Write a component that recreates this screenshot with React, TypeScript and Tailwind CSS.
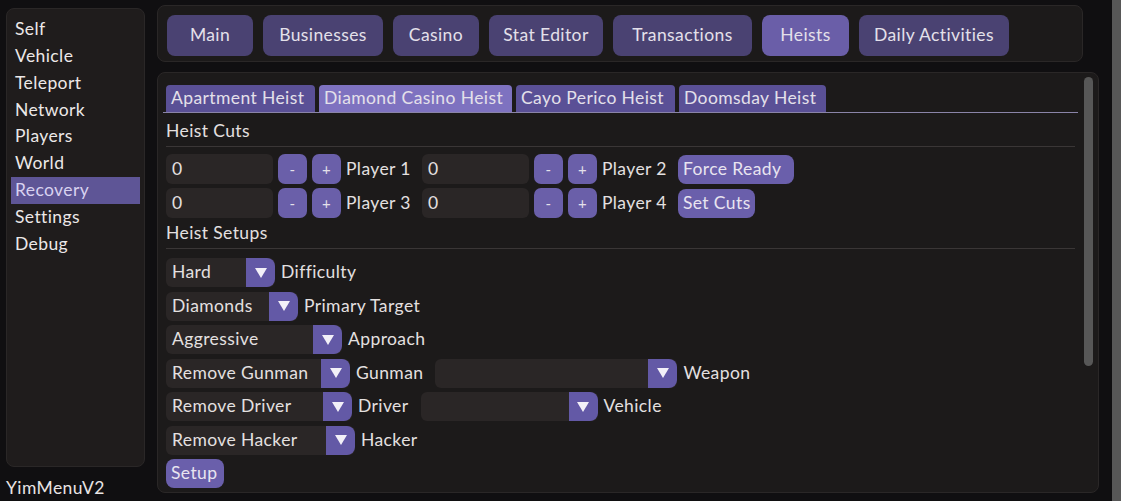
import React from "react";

const font = { fontFamily: "Lato, 'Noto Sans', sans-serif", letterSpacing: "0.4px" };

function TopBtn({ label, active, w }: { label: string; active?: boolean; w: string }) {
  return (
    <div
      className={`h-[41px] ${w} rounded-[8px] flex items-center justify-center text-[17.5px] text-[#e4e0ea] ${
        active ? "bg-[#6a5ea8]" : "bg-[#4a4272]"
      }`}
    >
      {label}
    </div>
  );
}

function SubTab({ label, active, w }: { label: string; active?: boolean; w: string }) {
  return (
    <div
      className={`h-[27px] ${w} rounded-t-[4px] flex items-center px-[5px] text-[17.5px] text-[#e4e0ea] whitespace-nowrap ${
        active ? "bg-[#7e72c0]" : "bg-[#5a5096]"
      }`}
    >
      {label}
    </div>
  );
}

function Input({ w, value }: { w: string; value?: string }) {
  return (
    <div className={`h-[30px] ${w} rounded-[6px] bg-[#2a2626] flex items-center px-[6px] text-[17.5px] text-[#e4e0e0]`}>
      {value}
    </div>
  );
}

function SmallBtn({ label }: { label: string }) {
  return (
    <div className="h-[30px] w-[29px] rounded-[7px] bg-[#6a5fa9] flex items-center justify-center text-[15px] text-[#e4e0ea]">
      {label}
    </div>
  );
}

function PurpleBtn({ label, w }: { label: string; w: string }) {
  return (
    <div className={`h-[29px] ${w} rounded-[8px] bg-[#6a5fab] flex items-center px-[5px] text-[17.5px] text-[#e8e4f0] whitespace-nowrap`}>
      {label}
    </div>
  );
}

function Arrow() {
  return (
    <svg width="14" height="12" viewBox="0 0 14 12">
      <path d="M1 1 L13 1 L7 11 Z" fill="#f2f0f8" />
    </svg>
  );
}

function Combo({ w, value }: { w: string; value?: string }) {
  return (
    <div className={`h-[29px] ${w} flex rounded-[6px] overflow-hidden bg-[#2a2626]`}>
      <div className="flex-1 flex items-center px-[6px] text-[17.5px] text-[#e4e0e0] whitespace-nowrap overflow-hidden">{value}</div>
      <div className="w-[29px] shrink-0 bg-[#6359a6] rounded-r-[8px] flex items-center justify-center">
        <Arrow />
      </div>
    </div>
  );
}

function Label({ children }: { children: React.ReactNode }) {
  return <div className="text-[17.5px] text-[#e4e0e0] whitespace-nowrap">{children}</div>;
}

export default function App() {
  const side = ["Self", "Vehicle", "Teleport", "Network", "Players", "World", "Recovery", "Settings", "Debug"];
  return (
    <div className="w-[1121px] h-[501px] bg-[#100f11] flex overflow-hidden" style={font}>
      {/* Left column */}
      <div className="w-[151px] flex flex-col pl-[6px] pt-[8px]">
        <div className="w-[139px] h-[462px] rounded-[8px] bg-[#1f1c1c] border border-[#2a2727] pt-[7px] px-[4px]">
          {side.map((s) => (
            <div
              key={s}
              className={`h-[26.8px] flex items-center pl-[4px] text-[17.5px] ${
                s === "Recovery" ? "bg-[#5e5596] text-[#d8d2f0]" : "text-[#ece8e8]"
              }`}
            >
              {s}
            </div>
          ))}
        </div>
        <div className="mt-[8px] text-[17.5px] text-[#e8e4e4]">YimMenuV2</div>
      </div>

      {/* Middle column */}
      <div className="ml-[6px] flex flex-col pt-[5px]">
        <div className="w-[926px] h-[57px] rounded-[8px] bg-[#1c1a1a] border border-[#2a2727] flex items-start pt-[9px] gap-[10px] pl-[9px]">
          <TopBtn label="Main" w="w-[86px]" />
          <TopBtn label="Businesses" w="w-[120px]" />
          <TopBtn label="Casino" w="w-[86px]" />
          <TopBtn label="Stat Editor" w="w-[114px]" />
          <TopBtn label="Transactions" w="w-[139px]" />
          <TopBtn label="Heists" w="w-[87px]" active />
          <TopBtn label="Daily Activities" w="w-[150px]" />
        </div>

        <div className="mt-[10px] w-[942px] h-[421px] rounded-[8px] bg-[#1c1a1a] border border-[#2a2727] flex">
          <div className="flex-1 pl-[8px] pt-[12px] pr-[6px]">
            {/* subtabs */}
            <div className="flex gap-[4px]">
              <SubTab label="Apartment Heist" w="w-[149px]" />
              <SubTab label="Diamond Casino Heist" w="w-[193px]" active />
              <SubTab label="Cayo Perico Heist" w="w-[159px]" />
              <SubTab label="Doomsday Heist" w="w-[147px]" />
            </div>
            <div className="h-[1px] bg-[#8a84a8] -ml-[3px] w-[915px]" />

            <div className="mt-[7px] text-[17.5px] text-[#e4e0e0] h-[22px] flex items-center">Heist Cuts</div>
            <div className="h-[1px] bg-[#3a3636] mt-[4px] w-[909px]" />

            <div className="mt-[7px] flex items-center gap-[5px]">
              <Input w="w-[107px]" value="0" />
              <SmallBtn label="-" />
              <SmallBtn label="+" />
              <Label>Player 1</Label>
              <div className="ml-[6px]"><Input w="w-[107px]" value="0" /></div>
              <SmallBtn label="-" />
              <SmallBtn label="+" />
              <Label>Player 2</Label>
              <div className="ml-[6px]"><PurpleBtn label="Force Ready" w="w-[116px]" /></div>
            </div>
            <div className="mt-[4px] flex items-center gap-[5px]">
              <Input w="w-[107px]" value="0" />
              <SmallBtn label="-" />
              <SmallBtn label="+" />
              <Label>Player 3</Label>
              <div className="ml-[6px]"><Input w="w-[107px]" value="0" /></div>
              <SmallBtn label="-" />
              <SmallBtn label="+" />
              <Label>Player 4</Label>
              <div className="ml-[6px]"><PurpleBtn label="Set Cuts" w="w-[77px]" /></div>
            </div>

            <div className="mt-[4px] text-[17.5px] text-[#e4e0e0] h-[22px] flex items-center">Heist Setups</div>
            <div className="h-[1px] bg-[#3a3636] mt-[4px] w-[909px]" />

            <div className="mt-[9px] flex flex-col gap-[4.5px]">
              <div className="flex items-center gap-[6px]">
                <Combo w="w-[109px]" value="Hard" />
                <Label>Difficulty</Label>
              </div>
              <div className="flex items-center gap-[6px]">
                <Combo w="w-[132px]" value="Diamonds" />
                <Label>Primary Target</Label>
              </div>
              <div className="flex items-center gap-[6px]">
                <Combo w="w-[176px]" value="Aggressive" />
                <Label>Approach</Label>
              </div>
              <div className="flex items-center gap-[6px]">
                <Combo w="w-[184px]" value="Remove Gunman" />
                <Label>Gunman</Label>
                <div className="ml-[6px]"><Combo w="w-[242px]" /></div>
                <Label>Weapon</Label>
              </div>
              <div className="flex items-center gap-[6px]">
                <Combo w="w-[186px]" value="Remove Driver" />
                <Label>Driver</Label>
                <div className="ml-[6px]"><Combo w="w-[177px]" /></div>
                <Label>Vehicle</Label>
              </div>
              <div className="flex items-center gap-[6px]">
                <Combo w="w-[189px]" value="Remove Hacker" />
                <Label>Hacker</Label>
              </div>
              <div className="flex items-center">
                <PurpleBtn label="Setup" w="w-[58px]" />
              </div>
            </div>
          </div>
          {/* scrollbar */}
          <div className="w-[14px] pt-[4px] pr-[3px]">
            <div className="w-[9px] h-[289px] rounded-[5px] bg-[#575757]" />
          </div>
        </div>
      </div>

      <div className="flex-1" />
      <div className="w-[9px] h-full bg-[#575757]" />
    </div>
  );
}
